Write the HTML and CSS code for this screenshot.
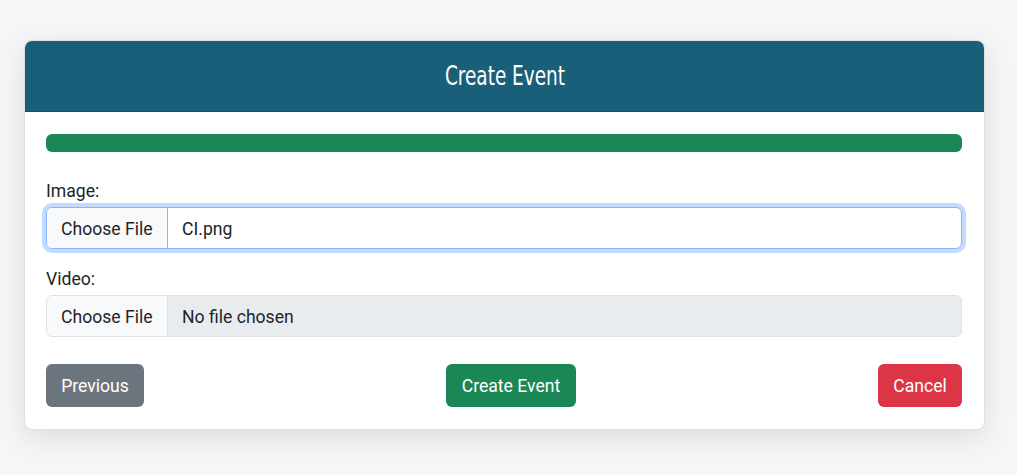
FILE: index.html
```html
<!DOCTYPE html>
<html lang="en">
<head>
<meta charset="utf-8">
<title>Create Event</title>
<link rel="stylesheet" href="styles.css">
</head>
<body>
<div class="page">
  <div class="card">
    <div class="card-header"><h2 class="title">Create Event</h2></div>
    <div class="card-body">
      <div class="progress"><div class="progress-bar"></div></div>
      <div class="field field-image">
        <label class="label">Image:</label>
        <div class="file-input focused">
          <span class="file-btn">Choose File</span>
          <span class="file-name">CI.png</span>
        </div>
      </div>
      <div class="field">
        <label class="label">Video:</label>
        <div class="file-input empty">
          <span class="file-btn">Choose File</span>
          <span class="file-name">No file chosen</span>
        </div>
      </div>
      <div class="actions">
        <button class="btn btn-secondary">Previous</button>
        <button class="btn btn-success">Create Event</button>
        <button class="btn btn-danger">Cancel</button>
      </div>
    </div>
  </div>
</div>
</body>
</html>
```

FILE: styles.css
```css
* { box-sizing: border-box; }
html, body { margin: 0; padding: 0; }
body {
  background: #f5f6f8;
  font-family: Roboto, "Liberation Sans", sans-serif;
  font-size: 17.6px;
  line-height: 24px;
  color: #212529;
  width: 1017px;
  height: 475px;
  overflow: hidden;
}
.page {
  padding: 40px 32px 0 24px;
}
.card {
  width: 961px;
  background: #fff;
  border: 1px solid rgba(0,0,0,0.12);
  border-radius: 8px;
  box-shadow: 0 8px 28px rgba(0,0,0,0.10);
  overflow: hidden;
}
.card-header {
  background: #1a5f7a;
  height: 72px;
  border-bottom: 1px solid #154e65;
  display: flex;
  align-items: center;
  justify-content: center;
  margin: -1px -1px 0 -1px;
}
.title {
  margin: 0;
  font-family: "DejaVu Sans", sans-serif;
  font-stretch: condensed;
  font-weight: normal;
  font-size: 27px;
  line-height: 32px;
  color: #fff;
  display: inline-block;
  transform: scaleX(0.76);
}
.card-body {
  padding: 22px 22px 22px 21px;
}
.progress {
  height: 18px;
  border-radius: 6px;
  background: #e9ecef;
  overflow: hidden;
}
.progress-bar {
  width: 100%;
  height: 100%;
  background: #1b8755;
}
.field {
  display: flex;
  flex-direction: column;
}
.field-image { margin-top: 27px; margin-bottom: 18px; }
.label {
  display: block;
  margin-bottom: 4px;
}
.file-input {
  display: flex;
  height: 42px;
  border: 1px solid #dee2e6;
  border-radius: 6px;
  overflow: hidden;
  background: #e9ecef;
}
.file-input.focused {
  background: #fff;
  border-color: #86b7fe;
  box-shadow: 0 0 0 4px rgba(13,110,253,0.25);
}
.file-btn {
  display: flex;
  align-items: center;
  width: 121px;
  padding: 1px 0 0 14px;
  background: #f8f9fa;
  border-right: 1px solid #dee2e6;
  color: #212529;
}
.focused .file-btn { border-right-color: #86b7fe; }
.file-name {
  display: flex;
  align-items: center;
  padding: 1px 0 0 14px;
}
.actions {
  display: flex;
  justify-content: space-between;
  margin-top: 27px;
}
.btn {
  font-family: Roboto, "Liberation Sans", sans-serif;
  font-size: 17.6px;
  line-height: 24px;
  height: 43px;
  padding: 0 14px;
  border: none;
  border-radius: 6px;
  color: #fff;
}
.btn-secondary { background: #6c757d; width: 98px; }
.btn-success { background: #1b8755; width: 130px; }
.btn-danger { background: #dc3545; width: 84px; }
```
